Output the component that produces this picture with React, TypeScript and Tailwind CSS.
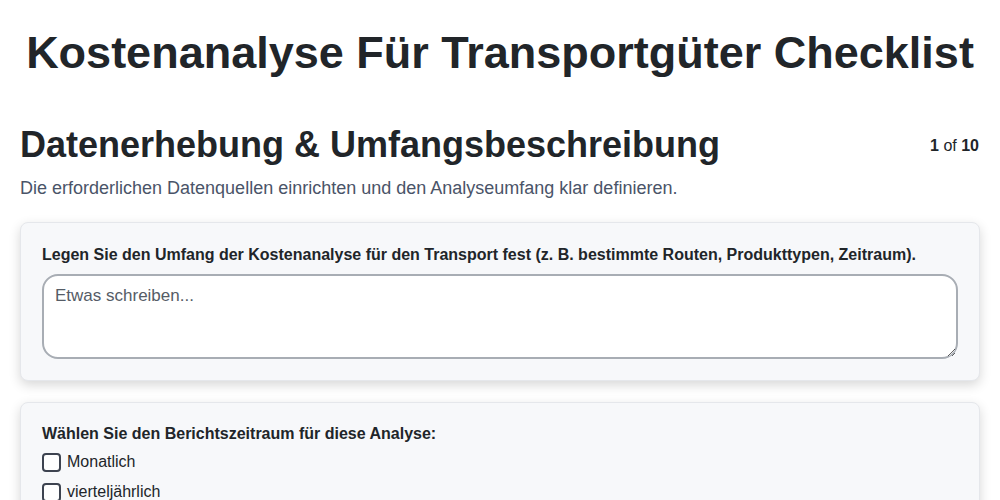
const periods = ['Monatlich', 'vierteljährlich', 'Jährlich'];

export default function App() {
  return (
    <div className="min-h-screen bg-white text-[#212529] font-['Liberation_Sans',Arial,sans-serif]">
      <h1 className="pt-[25px] text-center text-[45px] font-bold leading-tight">
        Kostenanalyse Für Transportgüter Checklist
      </h1>

      <div className="px-5 pt-[41px]">
        <div className="flex items-start justify-between">
          <h2 className="text-[36px] font-bold leading-tight">Datenerhebung &amp; Umfangsbeschreibung</h2>
          <div className="pt-[12px] pr-[1px] text-[16px]">
            <span className="font-bold">1</span> of <span className="font-bold">10</span>
          </div>
        </div>
        <p className="mt-[8px] text-[18px] text-[#4a5468]">
          Die erforderlichen Datenquellen einrichten und den Analyseumfang klar definieren.
        </p>

        <div className="mt-[20px] flex flex-col gap-[21px]">
          <div className="rounded-lg border border-[#e5e7eb] bg-[#f7f8fa] px-[21px] pt-[20px] pb-[21px] shadow-[0_4px_12px_rgba(0,0,0,0.16)]">
            <label className="block text-[16px] font-bold">
              Legen Sie den Umfang der Kostenanalyse für den Transport fest (z. B. bestimmte Routen, Produkttypen, Zeitraum).
            </label>
            <textarea
              placeholder="Etwas schreiben..."
              className="mt-[7px] block h-[85px] w-full rounded-2xl border-2 border-[#a8adb4] bg-white px-[11px] pt-[7px] pb-[8px] text-[17px] placeholder:text-[#555c66] outline-none"
            />
          </div>

          <div className="rounded-lg border border-[#e5e7eb] bg-[#f7f8fa] px-[21px] pt-[19px] pb-[21px] shadow-[0_4px_12px_rgba(0,0,0,0.16)]">
            <div className="text-[16px] font-bold">Wählen Sie den Berichtszeitraum für diese Analyse:</div>
            <div className="mt-[4px] flex flex-col gap-[6px]">
              {periods.map((p) => (
                <label key={p} className="flex items-center gap-[6px] text-[16px]">
                  <span className="h-[19px] w-[19px] rounded-[4px] border-2 border-[#3d4350] bg-white" />
                  {p}
                </label>
              ))}
            </div>
          </div>
        </div>
      </div>
    </div>
  );
}
